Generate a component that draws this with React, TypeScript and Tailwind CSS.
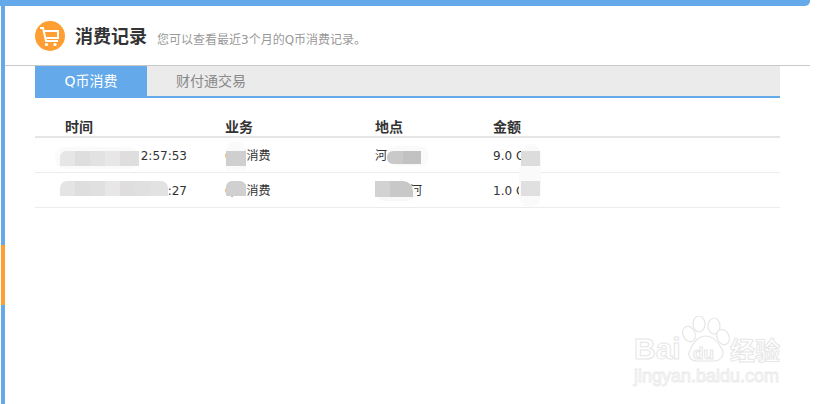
import React from "react";

const CJK = '"DejaVu Sans", "Noto Sans CJK SC", sans-serif';

function Patch({ className, children }: { className: string; children?: React.ReactNode }) {
  return <div className={"absolute flex overflow-hidden " + className}>{children}</div>;
}

function Cart() {
  return (
    <svg width="30" height="30" viewBox="0 0 30 30" className="shrink-0">
      <circle cx="15" cy="15" r="15" fill="#ff9f33" />
      <path d="M5 7h3l3 13h12" fill="none" stroke="#fff" strokeWidth="2" />
      <path d="M9 10h14v7h-12.5" fill="none" stroke="#fff" strokeWidth="2" />
      <circle cx="11.5" cy="23.5" r="1.6" fill="#fff" />
      <circle cx="20" cy="23.5" r="1.6" fill="#fff" />
    </svg>
  );
}

function Paw() {
  return (
    <svg width="60" height="50" viewBox="0 0 60 50" className="absolute left-[43px] top-[-18px]" fill="#fff" stroke="#e6e6e6" strokeWidth="1.2">
      <ellipse cx="12" cy="18" rx="6" ry="8" transform="rotate(-25 12 18)" />
      <ellipse cx="22" cy="8" rx="6" ry="8" />
      <ellipse cx="37" cy="10" rx="6" ry="8" />
      <ellipse cx="46" cy="21" rx="6" ry="8" transform="rotate(-25 46 21)" />
      <path d="M13 34c3-8 9-14 16-14s12 6 16 13c3 6-1 12-8 12H20c-7 0-10-6-7-11z" />
    </svg>
  );
}

function Row({ time, biz, place, amount, children }: { time: string; biz: string; place: React.ReactNode; amount: string; children: React.ReactNode }) {
  return (
    <div className="relative flex items-center h-[35px] pt-[2px] border-b border-[#ececec] text-xs text-[#333]">
      <div className="w-[152px] text-right">{time}</div>
      <div className="w-[188px] pl-[38px] shrink-0">{biz}</div>
      <div className="w-[118px] shrink-0">{place}</div>
      <div>{amount}</div>
      {children}
    </div>
  );
}

export default function App() {
  return (
    <div className="relative w-[827px] h-[404px] bg-white overflow-hidden" style={{ fontFamily: CJK }}>
      <div className="w-[810px] h-[6px] bg-[#64a9e9] rounded-br-[5px]" />
      <div className="flex w-[810px] h-[398px] pl-px">
        <div className="w-1 shrink-0 flex flex-col">
          <div className="h-[239px] bg-[#64a9e9]" />
          <div className="h-[60px] bg-[#ff9f33]" />
          <div className="flex-1 bg-[#64a9e9]" />
        </div>
        <div className="flex-1 relative">
          <div className="h-[59px] border-b border-[#c9c9c9] box-content flex items-center pl-[30px]">
            <Cart />
            <span className="ml-[10px] mt-[2px] text-[18px] font-bold text-[#333]">消费记录</span>
            <span className="ml-[10px] mt-[9px] text-xs text-[#999]">您可以查看最近3个月的Q币消费记录。</span>
          </div>
          <div className="ml-[30px] w-[745px]">
            <div className="flex h-[32px] bg-[#ebebeb] border-b-2 border-[#64a9e9] text-sm">
              <div className="w-[112px] bg-[#64a9e9] text-white flex items-center justify-center">Q币消费</div>
              <div className="ml-[29px] flex items-center text-[#888]">财付通交易</div>
            </div>
            <div className="flex items-end h-[40px] border-b-2 border-[#e5e5e5] text-sm leading-[18px] font-bold text-[#333] pl-[30px]">
              <div className="w-[160px]">时间</div>
              <div className="w-[150px]">业务</div>
              <div className="w-[118px]">地点</div>
              <div>金额</div>
            </div>
            <Row time="2:57:53" biz="Q币消费" place="河" amount="9.0 Q币">
              <Patch className="left-[20px] top-[9px] w-[84px] h-[22px] bg-[#fafafa] rounded-[10px]" />
              <Patch className="left-[191px] top-[3px] w-[20px] h-[30px] bg-[#fafafa] rounded-t-[10px]" />
              <Patch className="left-[352px] top-[8px] w-[42px] h-[20px] bg-[#fafafa] rounded-[10px]" />
              <Patch className="left-[486px] top-[6px] w-[20px] h-[29px] bg-[#fafafa] rounded-t-[12px]" />
              <Patch className="left-[25px] top-[13px] w-[79px] h-[15px] rounded-tl-[6px]">
                <div className="w-[15px] bg-[#e6e6e6]" />
                <div className="w-[15px] bg-[#dedede]" />
                <div className="w-[15px] bg-[#e2e2e2]" />
                <div className="w-[15px] bg-[#e8e6e6]" />
                <div className="flex-1 bg-[#dedede]" />
              </Patch>
              <Patch className="left-[191px] top-[13px] w-[20px] h-[15px] bg-[#cfcfcf]" />
              <Patch className="left-[352px] top-[13px] w-[34px] h-[13px] rounded-l-[6px]">
                <div className="w-[16px] bg-[#c9c9c9]" />
                <div className="flex-1 bg-[#c2c2c2]" />
              </Patch>
              <Patch className="left-[486px] top-[13px] w-[19px] h-[15px] bg-[#dcdcdc]" />
            </Row>
            <Row time=":27" biz="Q币消费" place={<span className="pl-[35px]">河</span>} amount="1.0 Q币">
              <Patch className="left-[484px] top-[-6px] w-[22px] h-[40px] bg-[#fafafa] rounded-b-[12px]" />
              <Patch className="left-[340px] top-[16px] w-[42px] h-[12px] bg-[#f8f8f8] rounded-b-[10px]" />
              <Patch className="left-[25px] top-[8px] w-[108px] h-[15px] rounded-t-[7px]">
                <div className="w-[15px] bg-[#e4e4e4]" />
                <div className="w-[15px] bg-[#dedede]" />
                <div className="w-[15px] bg-[#e0e0e0]" />
                <div className="w-[15px] bg-[#e8e6e6]" />
                <div className="w-[15px] bg-[#dedede]" />
                <div className="w-[15px] bg-[#e0e0e0]" />
                <div className="flex-1 bg-[#e2e2e2]" />
              </Patch>
              <Patch className="left-[191px] top-[8px] w-[20px] h-[15px] bg-[#d0d0d0] rounded-t-[6px]" />
              <Patch className="left-[340px] top-[8px] w-[38px] h-[16px] rounded-tr-[10px]">
                <div className="w-[15px] bg-[#d2d2d2]" />
                <div className="flex-1 bg-[#c8c8c8]" />
              </Patch>
              <Patch className="left-[486px] top-[8px] w-[19px] h-[15px] bg-[#e0e0e0]" />
            </Row>
          </div>
        </div>
      </div>
      <div className="absolute left-[634px] top-[334px] w-[160px] text-white" style={{ fontFamily: '"Liberation Sans", "Noto Sans CJK SC", sans-serif' }}>
        <Paw />
        <div className="relative flex items-end h-[30px] [-webkit-text-stroke:1px_#e6e6e6]">
          <span className="text-[30px] font-bold leading-none w-[59px]">Bai</span>
          <span className="text-[17px] font-bold leading-none w-[37px] pb-[2px]">du</span>
          <span className="text-[25px] font-bold leading-none">经验</span>
        </div>
        <div className="text-[18px] leading-[22px] mt-[1px] whitespace-nowrap [-webkit-text-stroke:1px_#ebebeb]">jingyan.baidu.com</div>
      </div>
    </div>
  );
}
